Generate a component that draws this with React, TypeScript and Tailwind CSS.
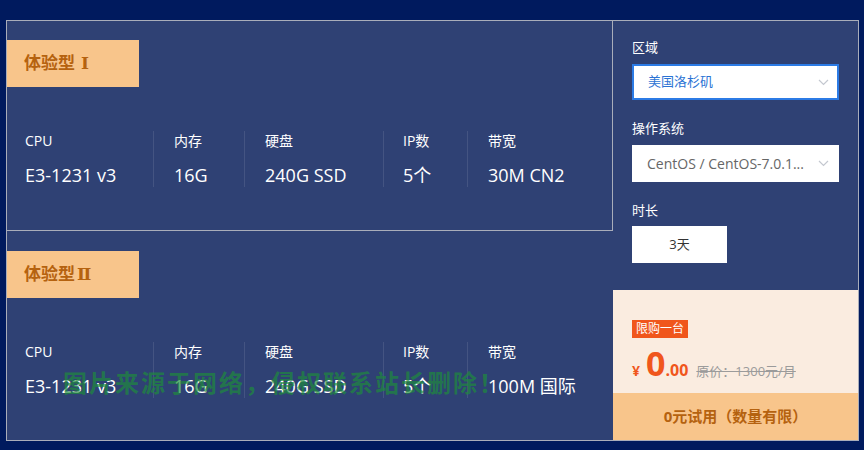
import React from 'react';

const specs1 = [
  { label: 'CPU', value: 'E3-1231 v3', w: 'w-[129px]' },
  { label: '内存', value: '16G', w: 'w-[91px] pl-5' },
  { label: '硬盘', value: '240G SSD', w: 'w-[139px] pl-5' },
  { label: 'IP数', value: '5个', w: 'w-[84px] pl-[19px]' },
];

function PlanCard({ title, numeral, gap, bandwidth, selected }: { title: string; numeral: string; gap?: boolean; bandwidth: string; selected?: boolean }) {
  return (
    <div className={`h-[210px] flex flex-col ${selected ? 'border-r border-b border-[#a9adba]' : ''}`}>
      <div className={`${selected ? 'mt-[19px]' : 'mt-5'} w-[132px] h-[47px] bg-[#f8c58b] flex items-center pl-[17px]`}>
        <span className="text-[17px] font-bold text-[#b5620f]">
          {title}
          <span className={`${gap ? 'ml-[6px]' : 'ml-[2px]'} font-['DejaVu_Serif',serif] text-[17px]`}>{numeral}</span>
        </span>
      </div>
      <div className="mt-[44px] pl-[18px] flex">
        {specs1.map((s) => (
          <div key={s.label} className={`${s.w} border-r border-white/10`}>
            <div className="text-[14px] leading-5 text-white">{s.label}</div>
            <div className="mt-3 text-[18px] leading-6 text-white">{s.value}</div>
          </div>
        ))}
        <div className="pl-5">
          <div className="text-[14px] leading-5 text-white">带宽</div>
          <div className="mt-3 text-[18px] leading-6 text-white">{bandwidth}</div>
        </div>
      </div>
    </div>
  );
}

function Chevron() {
  return (
    <svg width="11" height="7" viewBox="0 0 11 7" fill="none">
      <polyline points="1,1 5.5,5.5 10,1" stroke="#c4c8d0" strokeWidth="1.2" />
    </svg>
  );
}

export default function App() {
  return (
    <div className="w-[864px] h-[450px] bg-[#001a5e] pt-5 pl-[6px] font-['Open_Sans','Noto_Sans_CJK_SC',sans-serif]">
      <div className="relative flex w-[853px] h-[421px] border border-[#a9adba] bg-[#2f4174]">
        <div className="w-[606px] flex flex-col">
          <PlanCard title="体验型" numeral="Ⅰ" gap bandwidth="30M CN2" selected />
          <PlanCard title="体验型" numeral="Ⅱ" bandwidth="100M 国际" />
        </div>
        <div className="flex-1 flex flex-col">
          <div className="flex-1 pl-[19px] pr-[19px] pt-4">
            <div className="text-[13px] leading-5 text-white">区域</div>
            <div className="mt-[7px] h-9 bg-white border-2 border-[#2c7be5] flex items-center justify-between pl-[14px] pr-[8px]">
              <span className="text-[13px] text-[#2b73d4]">美国洛杉矶</span>
              <Chevron />
            </div>
            <div className="mt-[18px] text-[13px] leading-5 text-white">操作系统</div>
            <div className="mt-[7px] h-[37px] bg-white flex items-center justify-between pl-[15px] pr-[10px]">
              <span className="text-[14px] text-[#666]">CentOS / CentOS-7.0.1...</span>
              <Chevron />
            </div>
            <div className="mt-[18px] text-[13px] leading-5 text-white">时长</div>
            <div className="mt-[6px] w-[95px] h-[37px] bg-white flex items-center justify-center">
              <span className="text-[13px] text-[#333]">3天</span>
            </div>
          </div>
          <div className="h-[103px] bg-[#faece0] pl-[19px] pt-[25px]">
            <span className="inline-block h-[18px] px-1 bg-[#f0561c] text-white text-[12px] leading-[18px]">限购一台</span>
            <div className="mt-[6px] flex items-baseline text-[#f0561c]">
              <span className="text-[14px] font-bold">¥</span>
              <span className="ml-[6px] text-[34px] leading-[36px] font-bold">0</span>
              <span className="text-[16px] font-bold">.00</span>
              <span className="ml-2 text-[13px] text-[#9b9b9b] line-through">原价：1300元/月</span>
            </div>
          </div>
          <div className="h-[47px] bg-[#f8c58b] flex items-center justify-center">
            <span className="text-[15px] font-bold text-[#b5620f]">0元试用（数量有限）</span>
          </div>
        </div>
        <div className="absolute left-[56px] top-[344px] text-[24px] font-bold tracking-[2px] text-[#1e8c3c]/70 pointer-events-none">
          图片来源于网络，侵权联系站长删除！
        </div>
      </div>
    </div>
  );
}
